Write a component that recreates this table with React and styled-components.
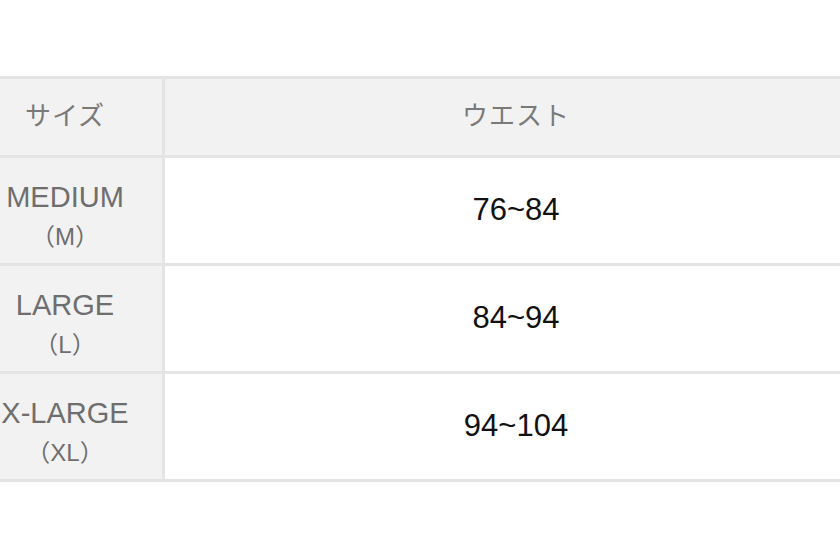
import styled, { createGlobalStyle } from 'styled-components';

const GlobalStyle = createGlobalStyle`
  body {
    margin: 0;
    background: #ffffff;
    font-family: "Liberation Sans", "Noto Sans CJK JP", sans-serif;
  }
`;

const Page = styled.div`
  width: 840px;
  height: 560px;
  overflow: hidden;
  padding-top: 76px;
  box-sizing: border-box;
`;

const Table = styled.div`
  display: grid;
  grid-template-columns: 194px 1fr;
  grid-template-rows: 76px repeat(3, 105px);
  gap: 3px;
  padding: 3px;
  margin-left: -35px;
  width: 905px;
  box-sizing: border-box;
  background: #e4e4e4;
`;

const HeadCell = styled.div`
  display: flex;
  align-items: center;
  justify-content: center;
  padding-bottom: 7px;
  background: #f2f2f2;
  color: #7a7a7a;
  font-family: "Noto Sans CJK JP", sans-serif;
  font-size: 26px;
  letter-spacing: 1px;
`;

const SizeCell = styled.div`
  display: flex;
  flex-direction: column;
  align-items: center;
  justify-content: center;
  gap: 12px;
  padding-top: 10px;
  background: #f2f2f2;
  color: #6e6e6e;
`;

const SizeName = styled.span`
  font-size: 29px;
  line-height: 30px;
`;

const SizeCode = styled.span`
  font-size: 24px;
  line-height: 26px;
`;

const ValueCell = styled.div`
  display: flex;
  align-items: center;
  justify-content: center;
  padding-bottom: 2px;
  background: #ffffff;
  color: #111111;
  font-size: 31px;
`;

const rows = [
  { name: 'MEDIUM', code: '（M）', waist: '76~84' },
  { name: 'LARGE', code: '（L）', waist: '84~94' },
  { name: 'X-LARGE', code: '（XL）', waist: '94~104' },
];

export default function App() {
  return (
    <Page>
      <GlobalStyle />
      <Table>
        <HeadCell>サイズ</HeadCell>
        <HeadCell>ウエスト</HeadCell>
        {rows.map((row) => [
          <SizeCell key={row.name}>
            <SizeName>{row.name}</SizeName>
            <SizeCode>{row.code}</SizeCode>
          </SizeCell>,
          <ValueCell key={row.waist}>{row.waist}</ValueCell>,
        ])}
      </Table>
    </Page>
  );
}
